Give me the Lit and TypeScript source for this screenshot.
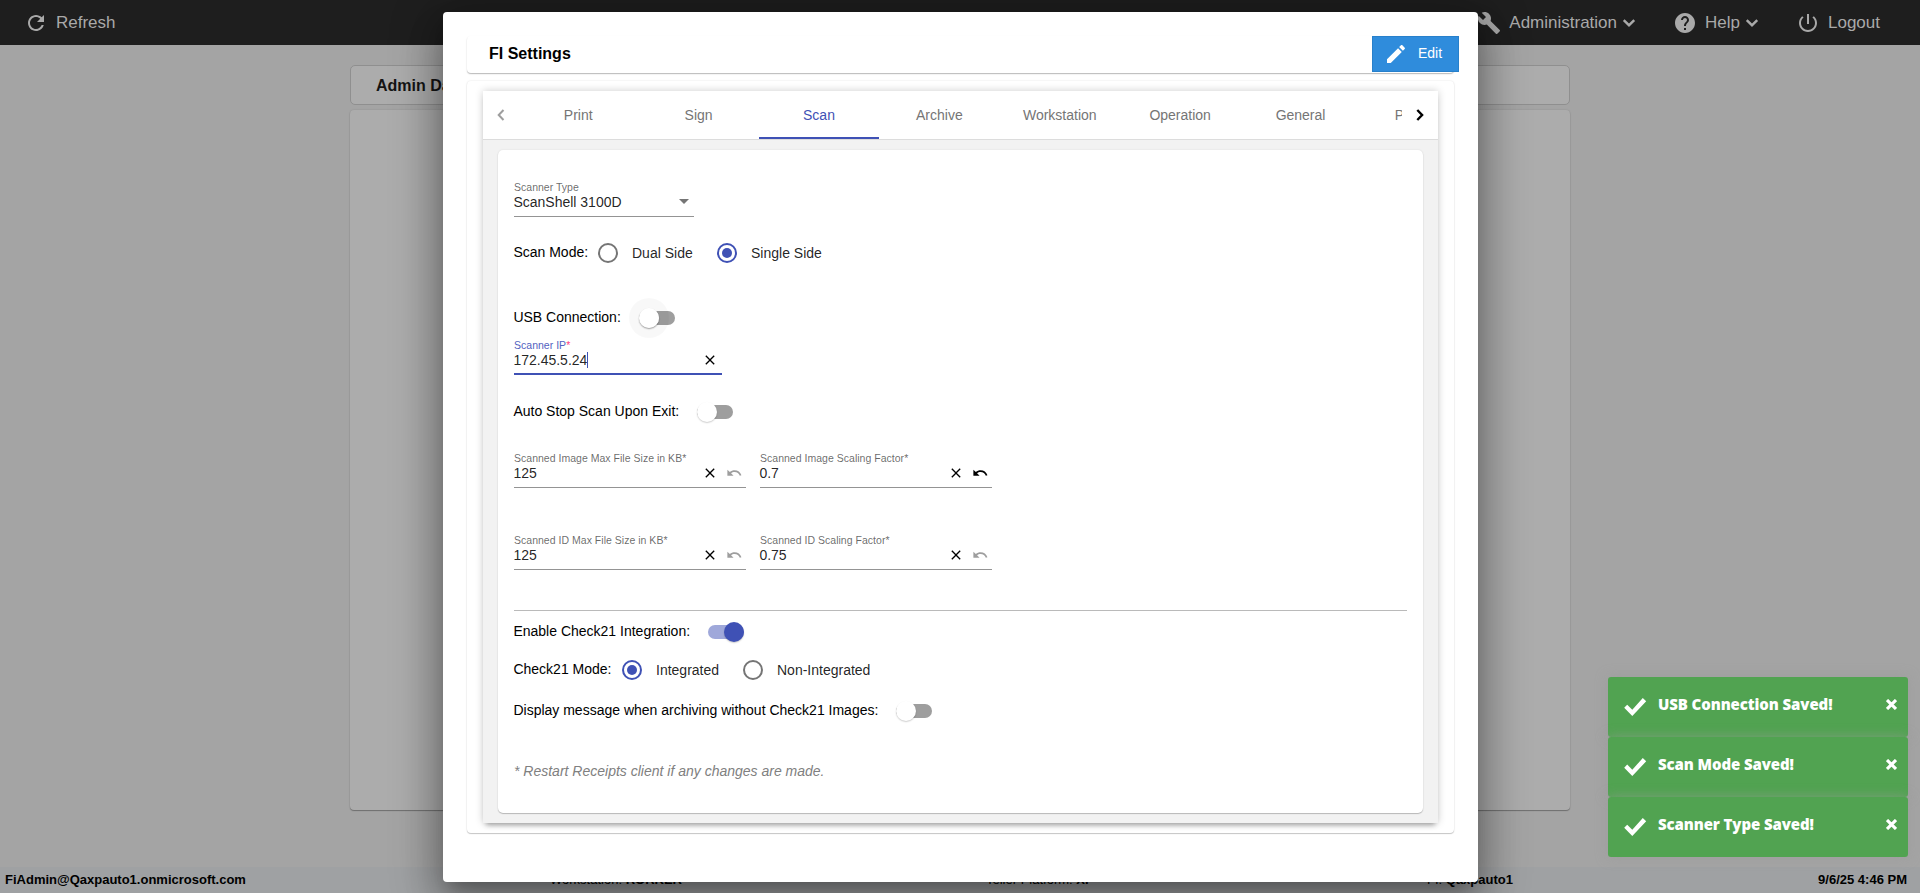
import { LitElement, html, css, svg } from "lit";
import { customElement, property } from "lit/decorators.js";
import { classMap } from "lit/directives/class-map.js";

@customElement("ui-icon")
class UiIcon extends LitElement {
  @property() name = "";
  static styles = css`
    :host { display: block; width: 24px; height: 24px; flex: none; }
    svg { display: block; width: 100%; height: 100%; fill: currentColor; }
  `;
  static paths: Record<string, string> = {
    refresh: "M17.65 6.35C16.2 4.9 14.21 4 12 4c-4.42 0-7.99 3.58-7.99 8s3.57 8 7.99 8c3.73 0 6.84-2.55 7.73-6h-2.08c-.82 2.33-3.04 4-5.65 4-3.31 0-6-2.69-6-6s2.69-6 6-6c1.66 0 3.14.69 4.22 1.78L13 11h7V4l-2.35 2.35z",
    build: "M22.7 19l-9.1-9.1c.9-2.3.4-5-1.5-6.9-2-2-5-2.4-7.4-1.3L9 6 6 9 1.6 4.7C.4 7.1.9 10.1 2.9 12.1c1.9 1.9 4.6 2.4 6.9 1.5l9.1 9.1c.4.4 1 .4 1.4 0l2.3-2.3c.5-.4.5-1.1.1-1.4z",
    help: "M12 2C6.48 2 2 6.48 2 12s4.48 10 10 10 10-4.48 10-10S17.52 2 12 2zm1 17h-2v-2h2v2zm2.07-7.75l-.9.92C13.45 12.9 13 13.5 13 15h-2v-.5c0-1.1.45-2.1 1.17-2.83l1.24-1.26c.37-.36.59-.86.59-1.41 0-1.1-.9-2-2-2s-2 .9-2 2H8c0-2.21 1.79-4 4-4s4 1.79 4 4c0 .88-.36 1.68-.93 2.25z",
    power: "M13 3h-2v10h2V3zm4.83 2.17l-1.42 1.42C17.99 7.86 19 9.81 19 12c0 3.87-3.13 7-7 7s-7-3.13-7-7c0-2.19 1.01-4.14 2.58-5.42L6.17 5.17C4.23 6.82 3 9.26 3 12c0 4.97 4.03 9 9 9s9-4.03 9-9c0-2.74-1.23-5.18-3.17-6.83z",
    down: "M7.6 8.2L12 12.6l4.4-4.4L18.1 9.9l-6.1 6.1-6.1-6.1 1.7-1.7z",
    edit: "M3 17.25V21h3.75L17.81 9.94l-3.75-3.75L3 17.25zM20.71 7.04c.39-.39.39-1.02 0-1.41l-2.34-2.34c-.39-.39-1.02-.39-1.41 0l-1.83 1.83 3.75 3.75 1.83-1.83z",
    close: "M19 6.41L17.59 5 12 10.59 6.41 5 5 6.41 10.59 12 5 17.59 6.41 19 12 13.41 17.59 19 19 17.59 13.41 12z",
    undo: "M12.5 8c-2.65 0-5.05.99-6.9 2.6L2 7v9h9l-3.62-3.62c1.39-1.16 3.16-1.88 5.12-1.88 3.54 0 6.55 2.31 7.6 5.5l2.37-.78C21.08 11.03 17.15 8 12.5 8z",
    check: "M1.2 13.2 4.2 10.2 9.3 15.2 19.8 3.8 23.2 7 9.3 21.2z",
  };
  render() {
    return html`<svg viewBox="0 0 24 24" preserveAspectRatio="none">${svg`<path d=${UiIcon.paths[this.name] ?? ""}></path>`}</svg>`;
  }
}

@customElement("ui-radio")
class UiRadio extends LitElement {
  @property({ type: Boolean }) checked = false;
  static styles = css`
    :host { display: flex; align-items: center; gap: 14px; height: 20px; font-size: 14px; color: rgba(0, 0, 0, .87); white-space: nowrap; }
    .ring { box-sizing: border-box; width: 20px; height: 20px; border: 2px solid #757575; border-radius: 50%; display: grid; place-items: center; }
    .on { border-color: #3f51b5; }
    .on::after { content: ""; width: 10px; height: 10px; border-radius: 50%; background: #3f51b5; }
    .text { line-height: 20px; }
  `;
  render() {
    return html`<span class=${classMap({ ring: true, on: this.checked })}></span><span class="text"><slot></slot></span>`;
  }
}

@customElement("ui-toggle")
class UiToggle extends LitElement {
  @property({ type: Boolean }) checked = false;
  @property({ type: Boolean }) focused = false;
  static styles = css`
    :host { display: block; }
    .track { width: 36px; height: 14px; border-radius: 8px; background: #9e9e9e; display: flex; align-items: center; }
    .thumb { width: 20px; height: 20px; flex: none; border-radius: 50%; background: #fff; box-shadow: 0 1px 1.5px rgba(0,0,0,.2); position: relative; }
    .on { background: #9fa8da; justify-content: flex-end; }
    .on .thumb { background: #3f51b5; }
    .halo { position: absolute; left: -10px; top: -10px; width: 40px; height: 40px; border-radius: 50%; background: rgba(0,0,0,.027); }
    .face { position: absolute; inset: 0; border-radius: 50%; background: #fff; box-shadow: 0 1px 1.5px rgba(0,0,0,.2); }
  `;
  render() {
    return html`<div class=${classMap({ track: true, on: this.checked })}><div class="thumb">
      ${this.focused ? html`<div class="halo"></div><div class="face"></div>` : ""}</div></div>`;
  }
}

@customElement("ui-field")
class UiField extends LitElement {
  @property() label = "";
  @property() value = "";
  @property() kind = "text";
  @property({ type: Boolean }) changed = false;
  static styles = css`
    :host { display: block; }
    .field { box-sizing: border-box; height: 36px; border-bottom: 1px solid #949494; display: flex; flex-direction: column; width: 232px; }
    .select { width: 180px; }
    .active { width: 208px; border-bottom: 2px solid #3f51b5; }
    .label { font-size: 10.5px; line-height: 12px; height: 13px; color: rgba(0,0,0,.6); letter-spacing: .02px; }
    .active .label { color: #5262c0; }
    .active .star { color: #ff4081; }
    .row { display: flex; align-items: center; height: 16px; color: rgba(0,0,0,.87); }
    .value { font-size: 14px; line-height: 16px; white-space: nowrap; margin-left: -.6px; }
    .caret { width: 1px; height: 16px; background: #3f51b5; }
    .space { flex: 1; }
    .close { width: 16px; height: 16px; color: #000; margin: 0 4px 0 0; }
    .undo { width: 16.5px; height: 16px; color: #9e9e9e; margin: 0 4px 0 3.5px; }
    .changed { color: #000; }
    .arrow { border: 5px solid transparent; border-top-color: #757575; border-bottom: 0; margin: -1px 5px 0 0; }
  `;
  render() {
    const active = this.kind === "active";
    const select = this.kind === "select";
    return html`<div class=${classMap({ field: true, active, select })}>
      <div class="label">${this.label}${select ? "" : html`<span class="star">*</span>`}</div>
      <div class="row">
        <span class="value">${this.value}</span>${active ? html`<i class="caret"></i>` : ""}
        <span class="space"></span>
        ${select ? html`<i class="arrow"></i>` : html`<ui-icon class="close" name="close"></ui-icon>`}
        ${this.kind === "text" ? html`<ui-icon class=${classMap({ undo: true, changed: this.changed })} name="undo"></ui-icon>` : ""}
      </div>
    </div>`;
  }
}

@customElement("app-root")
class AppRoot extends LitElement {
  static styles = css`
    :host { display: block; position: relative; width: 1920px; height: 893px; overflow: hidden; font-family: "Liberation Sans", Arial, sans-serif; color: #000; }
    * { box-sizing: border-box; }
    .page { height: 893px; background: #a4a4a4; display: flex; flex-direction: column; }
    .bar { height: 45px; background: #1e1e1e; color: #a9a9a9; display: flex; align-items: center; padding: 0 40px 0 24px; font-size: 17px; }
    .bar span { line-height: 20px; }
    .refresh { margin-right: 8px; }
    .grow { flex: 1; }
    .wrench { margin-right: 8px; }
    .chev { margin-left: 0; }
    .help { margin: 0 8px 0 32px; }
    .power { margin: 0 8px 0 32px; }
    .main { flex: 1; padding: 20px 350px 0; }
    .crumb { height: 40px; border: 1px solid #8f8f8f; border-radius: 5px; background: #acacac; font-weight: bold; font-size: 16px; line-height: 40px; padding-left: 25px; color: #141414; }
    .panel { margin-top: 5px; height: 700px; border-radius: 4px; background: #acacac; box-shadow: 0 1px 1px rgba(0,0,0,.3), 0 0 2px rgba(0,0,0,.12); }
    .status { height: 26px; background: #9fa1a3; display: grid; grid-template-columns: 545px 436px 441px 1fr auto; padding: 0 13px 0 5px; font-size: 13px; line-height: 25px; white-space: pre; }

    .modal { position: absolute; left: 443px; top: 12px; width: 1035px; height: 870px; background: #fff; border-radius: 4px; padding: 24px 24px 0; box-shadow: 0 11px 15px -7px rgba(0,0,0,.2), 0 24px 38px 3px rgba(0,0,0,.14), 0 9px 46px 8px rgba(0,0,0,.3); }
    .head { height: 37px; border-radius: 4px; display: flex; align-items: flex-start; justify-content: space-between; padding-left: 22px; box-shadow: 0 1px 1px rgba(0,0,0,.2), 0 1px 2px rgba(0,0,0,.1); }
    .title { font-weight: bold; font-size: 16px; line-height: 35px; }
    .edit { width: 87px; height: 36px; margin-right: -5px; background: #2f8cdc; border: 1px solid #2780cb; color: #fff; display: flex; align-items: center; padding-left: 11px; gap: 10px; font-size: 14px; }
    .edit span { line-height: 34px; margin-top: -2px; }
    .outer { margin-top: 8px; height: 752px; padding: 10px 16px; border-radius: 4px; box-shadow: 0 1px 1px rgba(0,0,0,.2), 0 0 2px rgba(0,0,0,.12); }
    .tabs { height: 732px; background: #f2f2f2; box-shadow: 0 5px 5px -3px rgba(0,0,0,.3), 0 0 8px rgba(0,0,0,.2); display: flex; flex-direction: column; }
    .strip { height: 49px; background: #fff; border-bottom: 1px solid #dcdcdc; display: flex; }
    .pager { width: 36px; display: grid; place-items: center; flex: none; }
    .pager svg { width: 8px; height: 12px; fill: none; stroke: #9e9e9e; stroke-width: 2; }
    .pager.next svg { stroke: #000; stroke-width: 2.4; }
    .list { flex: 1; overflow: hidden; display: flex; margin-left: -1px; }
    .tab { width: 120.4px; flex: none; height: 48px; line-height: 48px; text-align: center; font-size: 14px; color: #757575; }
    .sel { color: #3f51b5; border-bottom: 2px solid #3f51b5; }
    .last { text-align: left; padding-left: 34px; }
    .card { margin: 10px 15px; height: 663px; background: #fff; border-radius: 5px; padding: 31px 16px 0; box-shadow: 0 1px 1px rgba(0,0,0,.22), 0 0 2px rgba(0,0,0,.1); }
    .line { display: flex; align-items: center; height: 20px; font-size: 14px; white-space: nowrap; }
    .name { line-height: 20px; height: 20px; margin: -2px 0 0 -.6px; padding-right: .6px; box-sizing: content-box; }
    .pair { display: grid; grid-template-columns: 232px 232px; column-gap: 14px; }
    .r1 { margin-top: 26px; } .r2 { margin-top: 45px; } .ip { margin-top: 11px; } .r3 { margin-top: 27px; }
    .p1 { margin-top: 30px; } .p2 { margin-top: 46px; }
    .rule { height: 1px; background: #bababa; margin: 40px 0 0; }
    .r4 { margin-top: 11px; } .r5 { margin-top: 18px; } .r6 { margin-top: 21px; }
    .w1 { width: 84px; } .w2 { width: 125px; } .w3 { width: 183px; } .w4 { width: 194px; } .w5 { width: 108px; } .w6 { width: 382px; }
    .opt1 { width: 119px; } .opt2 { width: 121px; }
    .note { margin-top: 40px; font-style: italic; font-size: 14px; line-height: 20px; color: #808080; }

    .toasts { position: absolute; left: 1608px; top: 677px; width: 300px; }
    .toast { height: 60px; border-radius: 3px; background: #51a351; color: #fff; display: flex; padding: 0 11px 0 15px; font: 800 15px "Open Sans", "Noto Sans", sans-serif; box-shadow: 0 0 12px rgba(153,153,153,.6); }
    .toast .tick { width: 24px; height: 25px; margin: 16.5px 11px 0 0; }
    .toast span { line-height: 22px; margin-top: 16px; flex: 1; white-space: nowrap; letter-spacing: -.1px; }
    .x { width: 11px; height: 11px; margin-top: 21.5px; stroke: #fff; stroke-width: 3.1; }
  `;
  tabs = ["Print", "Sign", "Scan", "Archive", "Workstation", "Operation", "General"];
  toasts = ["USB Connection Saved!", "Scan Mode Saved!", "Scanner Type Saved!"];
  render() {
    return html`
      <div class="page">
        <div class="bar">
          <ui-icon class="refresh" name="refresh"></ui-icon><span>Refresh</span><div class="grow"></div>
          <ui-icon class="wrench" name="build"></ui-icon><span>Administration</span><ui-icon class="chev" name="down"></ui-icon>
          <ui-icon class="help" name="help"></ui-icon><span>Help</span><ui-icon class="chev" name="down"></ui-icon>
          <ui-icon class="power" name="power"></ui-icon><span>Logout</span>
        </div>
        <div class="main"><div class="crumb">Admin Dashboard</div><div class="panel"></div></div>
        <div class="status"><b>FiAdmin@Qaxpauto1.onmicrosoft.com</b><span>Workstation: <b>RORKER</b></span><span>Teller Platform: <b>XP</b></span><span>FI: <b>Qaxpauto1</b></span><b>9/6/25 4:46 PM</b></div>
      </div>
      <div class="modal">
        <div class="head"><div class="title">FI Settings</div><div class="edit"><ui-icon name="edit"></ui-icon><span>Edit</span></div></div>
        <div class="outer"><div class="tabs">
          <div class="strip">
            <div class="pager"><svg viewBox="0 0 8 12"><path d="M6.5 1 1.7 6l4.8 5"/></svg></div>
            <div class="list">${this.tabs.map((t) => html`<div class=${classMap({ tab: true, sel: t === "Scan" })}>${t}</div>`)}<div class="tab last">P</div></div>
            <div class="pager next"><svg viewBox="0 0 8 12"><path d="M1.3 1 6.1 6l-4.8 5"/></svg></div>
          </div>
          <div class="card">
            <ui-field kind="select" label="Scanner Type" value="ScanShell 3100D"></ui-field>
            <div class="line r1"><div class="name w1">Scan Mode:</div><ui-radio class="opt1">Dual Side</ui-radio><ui-radio checked>Single Side</ui-radio></div>
            <div class="line r2"><div class="name w2">USB Connection:</div><ui-toggle focused></ui-toggle></div>
            <ui-field class="ip" kind="active" label="Scanner IP" value="172.45.5.24"></ui-field>
            <div class="line r3"><div class="name w3">Auto Stop Scan Upon Exit:</div><ui-toggle></ui-toggle></div>
            <div class="pair p1"><ui-field label="Scanned Image Max File Size in KB" value="125"></ui-field><ui-field label="Scanned Image Scaling Factor" value="0.7" changed></ui-field></div>
            <div class="pair p2"><ui-field label="Scanned ID Max File Size in KB" value="125"></ui-field><ui-field label="Scanned ID Scaling Factor" value="0.75"></ui-field></div>
            <div class="rule"></div>
            <div class="line r4"><div class="name w4">Enable Check21 Integration:</div><ui-toggle checked></ui-toggle></div>
            <div class="line r5"><div class="name w5">Check21 Mode:</div><ui-radio class="opt2" checked>Integrated</ui-radio><ui-radio>Non-Integrated</ui-radio></div>
            <div class="line r6"><div class="name w6">Display message when archiving without Check21 Images:</div><ui-toggle></ui-toggle></div>
            <div class="note">* Restart Receipts client if any changes are made.</div>
          </div>
        </div></div>
      </div>
      <div class="toasts">${this.toasts.map((t) => html`<div class="toast"><ui-icon class="tick" name="check"></ui-icon><span>${t}</span><svg class="x" viewBox="0 0 11 11"><path d="M1 1 10 10M10 1 1 10"/></svg></div>`)}</div>
    `;
  }
}
